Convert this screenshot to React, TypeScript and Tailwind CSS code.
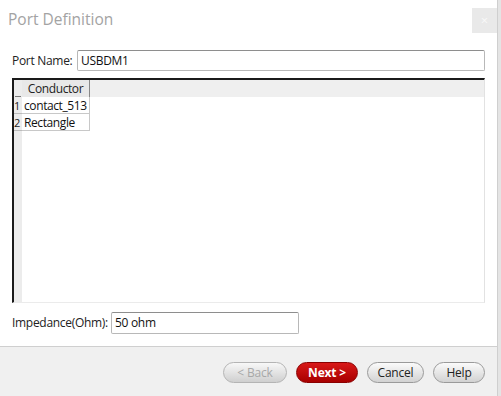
import React from "react";

const font = { fontFamily: '"Open Sans", "Noto Sans", sans-serif' };

function PillButton({ children, kind }: { children: React.ReactNode; kind: "disabled" | "primary" | "normal" }) {
  const base = "h-[21px] rounded-full flex items-center justify-center text-[12px] leading-none tracking-[-0.2px]";
  if (kind === "primary")
    return (
      <div className={`${base} w-[62px] border border-[#8a0000] bg-gradient-to-b from-[#d81818] to-[#a80000] text-white font-bold`}>
        {children}
      </div>
    );
  if (kind === "disabled")
    return (
      <div className={`${base} w-[64px] border border-[#b4b4b4] bg-gradient-to-b from-[#f8f8f8] to-[#cfcfcf] text-[#a8a8a8]`}>
        {children}
      </div>
    );
  return (
    <div className={`${base} border border-[#9a9a9a] bg-gradient-to-b from-[#fbfbfb] to-[#d2d2d2] text-[#222]`}>
      {children}
    </div>
  );
}

export default function App() {
  return (
    <div className="w-[501px] h-[396px] flex bg-white overflow-hidden" style={font}>
      <div className="w-[497px] h-full flex flex-col bg-white">
        {/* header */}
        <div className="flex items-start justify-between h-[50px] pl-[8px]">
          <div className="text-[15.5px] text-[#a3a3a3] mt-[6px] leading-[26px]">Port Definition</div>
          <div className="mt-[8px] w-[25px] h-[25px] bg-[#e9e9e9] flex items-center justify-center text-[#f8f8f8] text-[13px] leading-none">
            ×
          </div>
        </div>
        {/* port name */}
        <div className="flex items-center h-[21px] pl-[12px] text-[12px] tracking-[-0.3px]">
          <span className="text-[#222] w-[65px] shrink-0 whitespace-nowrap">Port Name:</span>
          <div className="w-[408px] shrink-0 h-[21px] border border-[#b8b8b8] border-t-[#8e8e8e] rounded-[2px] flex items-center px-[3px] text-[#111]">
            USBDM1
          </div>
        </div>
        {/* table */}
        <div className="ml-[12px] mt-[7px] w-[473px] h-[225px] border-t-2 border-l-2 border-t-[#1a1a1a] border-l-[#1a1a1a] border-r border-b border-r-[#e2e2e2] border-b-[#ebebeb] flex text-[12px] tracking-[-0.4px]">
          <div className="w-[8px] h-full bg-[#ececec] flex flex-col">
            <div className="h-[17px] border-b border-b-[#777] mx-[1px]"></div>
            <div className="h-[17px] text-[11px] leading-[17px] text-[#222] border-b border-b-[#bbb]">1</div>
            <div className="h-[17px] text-[11px] leading-[17px] text-[#222] border-b border-b-[#bbb]">2</div>
          </div>
          <div className="flex-1 flex flex-col">
            <div className="h-[17px] bg-[#efefef] flex">
              <div className="w-[68px] h-full border-r border-r-[#888] bg-[#e8e8e8] leading-[17px] text-center text-[#222]">
                Conductor
              </div>
            </div>
            <div className="w-[68px] h-[17px] border-r border-b border-[#c8c8c8] leading-[17px] pl-[2px] text-[#111] whitespace-nowrap overflow-hidden">
              contact_513
            </div>
            <div className="w-[68px] h-[17px] border-r border-b border-[#c8c8c8] leading-[17px] pl-[2px] text-[#111]">
              Rectangle
            </div>
          </div>
        </div>
        {/* impedance */}
        <div className="flex items-center h-[22px] pl-[12px] mt-[9px] text-[12px] tracking-[-0.3px]">
          <span className="text-[#222] w-[99px] shrink-0 whitespace-nowrap">Impedance(Ohm):</span>
          <div className="w-[188px] shrink-0 h-[22px] border border-[#b8b8b8] border-t-[#8e8e8e] rounded-[2px] flex items-center px-[3px] text-[#111]">
            50 ohm
          </div>
        </div>
        {/* footer */}
        <div className="mt-[12px] flex-1 border-t border-t-[#cfcfcf] bg-[#f0f0f0] flex items-start justify-end pr-[12px] pt-[15px] gap-[9px]">
          <PillButton kind="disabled">&lt; Back</PillButton>
          <PillButton kind="primary">Next &gt;</PillButton>
          <div className="w-[57px]">
            <PillButton kind="normal">Cancel</PillButton>
          </div>
          <div className="w-[52px]">
            <PillButton kind="normal">Help</PillButton>
          </div>
        </div>
      </div>
      <div className="w-[4px] h-full bg-[#e4e4e4] border-l border-l-[#cfcfcf]"></div>
    </div>
  );
}
